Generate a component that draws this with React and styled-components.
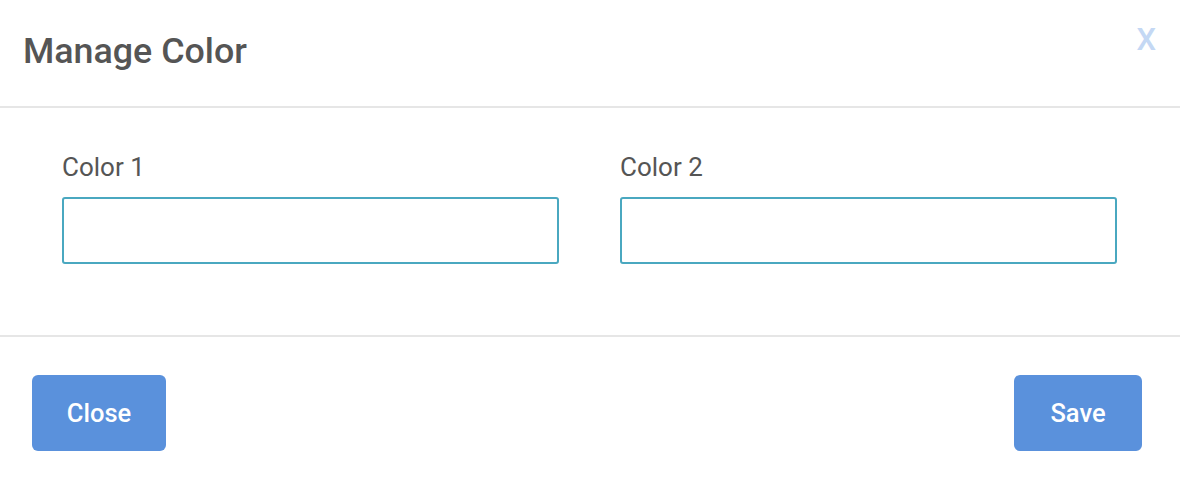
import styled, { createGlobalStyle } from "styled-components";

const GlobalStyle = createGlobalStyle`
  html, body {
    margin: 0;
    padding: 0;
    background: #fff;
    font-family: Roboto, "Liberation Sans", sans-serif;
  }
`;

const Modal = styled.div`
  width: 1180px;
  height: 480px;
  background: #fff;
  display: flex;
  flex-direction: column;
`;

const Header = styled.div`
  height: 108px;
  box-sizing: border-box;
  padding: 0 24px 0 23px;
  display: flex;
  align-items: center;
  justify-content: space-between;
  border-bottom: 2px solid #e6e6e6;
`;

const Title = styled.h2`
  margin: 0 0 4px;
  font-size: 35.8px;
  font-weight: 500;
  color: #555;
`;

const CloseX = styled.span`
  align-self: flex-start;
  margin-top: 21px;
  font-size: 31px;
  font-weight: 500;
  color: #c4d8f4;
  cursor: pointer;
`;

const Body = styled.div`
  height: 229px;
  box-sizing: border-box;
  padding: 44px 63px 0 62px;
  display: grid;
  grid-template-columns: 1fr 1fr;
  column-gap: 61px;
  align-content: start;
  border-bottom: 2px solid #e6e6e6;
`;

const Field = styled.div`
  display: flex;
  flex-direction: column;
`;

const Label = styled.label`
  font-size: 26px;
  color: #555;
  line-height: 30px;
  margin-bottom: 15px;
`;

const Input = styled.input`
  height: 67px;
  box-sizing: border-box;
  border: 2px solid #4aa8c0;
  border-radius: 3px;
  outline: none;
  padding: 0 14px;
  font-family: inherit;
  font-size: 22px;
`;

const Footer = styled.div`
  padding: 38px 38px 0 32px;
  display: flex;
  justify-content: space-between;
  align-items: flex-start;
`;

const Button = styled.button`
  height: 76px;
  width: ${(p) => p.$w}px;
  padding: 0;
  border: none;
  border-radius: 6px;
  background: #5a91dc;
  color: #fff;
  font-family: inherit;
  font-size: 25.5px;
  font-weight: 500;
  cursor: pointer;
`;

export default function App() {
  return (
    <>
      <GlobalStyle />
      <Modal>
        <Header>
          <Title>Manage Color</Title>
          <CloseX>X</CloseX>
        </Header>
        <Body>
          <Field>
            <Label>Color 1</Label>
            <Input />
          </Field>
          <Field>
            <Label>Color 2</Label>
            <Input />
          </Field>
        </Body>
        <Footer>
          <Button $w={134}>Close</Button>
          <Button $w={128}>Save</Button>
        </Footer>
      </Modal>
    </>
  );
}
